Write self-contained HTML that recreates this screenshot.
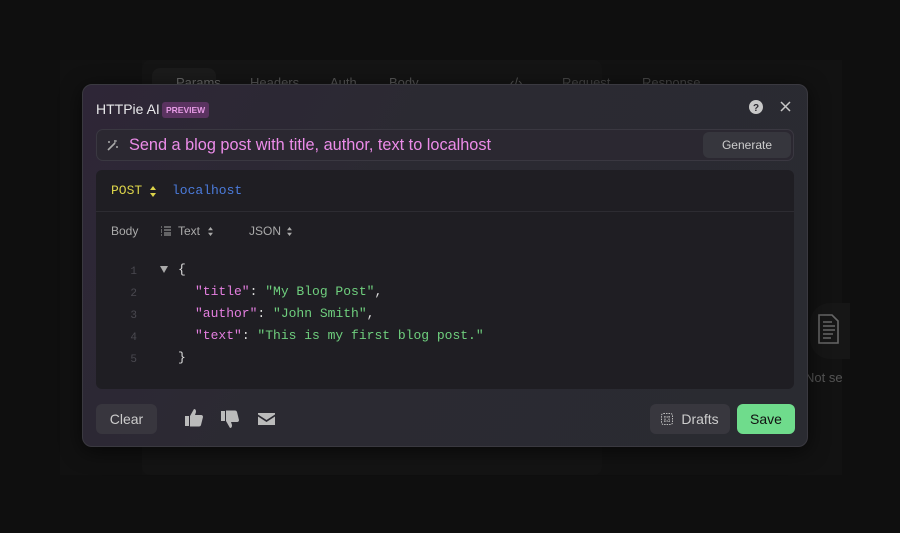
<!DOCTYPE html>
<html><head><meta charset="utf-8"><style>
*{box-sizing:border-box;margin:0;padding:0}
body{width:900px;height:533px;background:#0f0f0f;font-family:"Liberation Sans",sans-serif;position:relative;overflow:hidden}
.app{position:absolute;left:60px;top:60px;width:782px;height:415px;background:#121212;}
.app .side{position:absolute;left:0;top:0;width:82px;height:415px;background:#111}
.app .tabs{position:absolute;left:82px;top:0;width:460px;height:415px;background:#141414;border-radius:8px}
.tab{position:absolute;top:15px;font-size:13px;color:#555;white-space:nowrap}
.m{position:absolute;left:82px;top:84px;width:726px;height:363px;border-radius:10px;background:linear-gradient(120deg,#2e2637 0%,#2b2a32 40%,#2a2b31 100%);box-shadow:0 4px 20px rgba(0,0,0,.6);border:1px solid #3a3940}
.abs{position:absolute;white-space:nowrap}
.mono{font-family:"Liberation Mono",monospace}
.btn{position:absolute;border-radius:6px;font-size:14px;display:flex;align-items:center;justify-content:center}
</style></head><body>
<div class="app"><div class="side"></div><div class="tabs">
<div style="position:absolute;left:10px;top:8px;width:64px;height:30px;background:#1b1b1b;border-radius:8px"></div>
<span class="tab" style="left:34px;color:#666">Params</span><span class="tab" style="left:108px">Headers</span><span class="tab" style="left:188px">Auth</span><span class="tab" style="left:247px">Body</span><span class="tab" style="left:368px">‹/›</span>
</div>
<span class="tab" style="left:502px;top:15px;color:#444">Request</span><span class="tab" style="left:582px;top:15px;color:#444">Response</span>
<div style="position:absolute;left:750px;top:243px;width:40px;height:56px;background:#161616;border-radius:20px 0 0 20px"></div>
<svg class="abs" style="left:757px;top:253px" width="26" height="32" viewBox="0 0 26 32" fill="none" stroke="#666" stroke-width="1.6"><path d="M2 2h13l6 6v22H2z"/><path d="M6 9h9M6 13h12M6 17h12M6 21h10M6 25h8"/></svg>
<span class="tab" style="left:745px;top:310px;font-size:13px;color:#555">Not se</span>
</div>
<div class="m">
<span class="abs" style="left:13px;top:16px;color:#e8e8ea;font-size:14px">HTTPie AI</span>
<span class="abs" style="left:79px;top:17px;background:#5a3360;color:#e79be6;font-size:8.5px;font-weight:bold;padding:3px 4px;border-radius:3px">PREVIEW</span>
<svg class="abs" style="left:666px;top:15px" width="14" height="14" viewBox="0 0 14 14"><circle cx="7" cy="7" r="7" fill="#c8c8c8"/><text x="7" y="11" font-size="10" font-weight="bold" text-anchor="middle" fill="#2c2a31" font-family="Liberation Sans">?</text></svg>
<svg class="abs" style="left:697px;top:16px" width="11" height="11" viewBox="0 0 11 11" stroke="#c8c8c8" stroke-width="1.5"><path d="M1 1l9 9M10 1l-9 9"/></svg>
<div class="abs" style="left:13px;top:44px;width:698px;height:32px;border:1px solid #3a3841;border-radius:7px;background:#2b2831"></div>
<svg class="abs" style="left:23px;top:54px" width="13" height="13" viewBox="0 0 13 13" stroke="#aaa" stroke-width="1.6"><path d="M2 11l7-7"/><path d="M9 1v3M8 2h3M3 2v2M2 3h2M11 7v2M10 8h2" stroke-width="1"/></svg>
<span class="abs" style="left:46px;top:51px;color:#ec8ce9;font-size:16.3px">Send a blog post with title, author, text to localhost</span>
<div class="btn" style="left:620px;top:47px;width:88px;height:26px;background:#36363d;color:#ccc;font-size:12px">Generate</div>
<div class="abs" style="left:13px;top:85px;width:698px;height:219px;background:#1f1e23;border-radius:6px"></div>
<div class="abs" style="left:13px;top:126px;width:698px;height:1px;background:#2d2c32"></div>
<span class="abs mono" style="left:28px;top:98px;color:#dcd44a;font-size:13px">POST</span>
<svg class="abs" style="left:67px;top:101px" width="6" height="11" viewBox="0 0 6 11" fill="#dcd44a"><path d="M0 4l3-4 3 4zM0 7l3 4 3-4z"/></svg>
<span class="abs mono" style="left:89px;top:98px;color:#4b7bdb;font-size:13px">localhost</span>
<span class="abs" style="left:28px;top:139px;color:#aaa;font-size:12px">Body</span>
<svg class="abs" style="left:77px;top:141px" width="12" height="10" viewBox="0 0 12 10" stroke="#aaa" stroke-width="1"><path d="M1 1h1M4 1h7M1 4h1M4 4h7M4 7h7M1 9h1M4 9h7M1 6h1"/></svg>
<span class="abs" style="left:95px;top:139px;color:#aaa;font-size:12px">Text</span>
<svg class="abs" style="left:125px;top:142px" width="5" height="9" viewBox="0 0 6 11" fill="#aaa"><path d="M0 4l3-4 3 4zM0 7l3 4 3-4z"/></svg>
<span class="abs" style="left:166px;top:139px;color:#aaa;font-size:12px">JSON</span>
<svg class="abs" style="left:204px;top:142px" width="5" height="9" viewBox="0 0 6 11" fill="#aaa"><path d="M0 4l3-4 3 4zM0 7l3 4 3-4z"/></svg>
<div class="abs mono" style="left:40px;top:176px;color:#4a4950;font-size:11px;line-height:22px;text-align:right;width:14px">1<br>2<br>3<br>4<br>5</div>
<svg class="abs" style="left:77px;top:181px" width="8" height="7" viewBox="0 0 8 7" fill="#aaa"><path d="M0 0h8L4 7z"/></svg>
<div class="abs mono" style="left:95px;top:174px;color:#ddd;font-size:13px;line-height:22px;white-space:pre">{
<span style="padding-left:17px"><span style="color:#e47fe0">"title"</span>: <span style="color:#6fcf7e">"My Blog Post"</span>,</span>
<span style="padding-left:17px"><span style="color:#e47fe0">"author"</span>: <span style="color:#6fcf7e">"John Smith"</span>,</span>
<span style="padding-left:17px"><span style="color:#e47fe0">"text"</span>: <span style="color:#6fcf7e">"This is my first blog post."</span></span>
}</div>
<div class="btn" style="left:13px;top:319px;width:61px;height:30px;background:#38363e;color:#ccc">Clear</div>
<svg class="abs" style="left:101px;top:323px" width="20" height="20" viewBox="0 0 20 20" fill="#bbb"><path d="M1 8h4v10H1zM6 8l4-7c2 0 2 2 2 3l-1 3h6c1.5 0 2 1 2 2l-2 8c-.3 1-1 1.5-2 1.5H6z"/></svg>
<svg class="abs" style="left:137px;top:324px" width="20" height="20" viewBox="0 0 20 20" fill="#bbb" transform="scale(1,-1)"><path d="M1 8h4v10H1zM6 8l4-7c2 0 2 2 2 3l-1 3h6c1.5 0 2 1 2 2l-2 8c-.3 1-1 1.5-2 1.5H6z"/></svg>
<svg class="abs" style="left:175px;top:328px" width="17" height="12" viewBox="0 0 17 12" fill="#bbb"><path d="M0 0h17v1.5L8.5 7 0 1.5zM0 3.5l8.5 5.5 8.5-5.5V12H0z"/></svg>
<div class="btn" style="left:567px;top:319px;width:80px;height:30px;background:#38373e;color:#ccc;gap:8px"><svg width="12" height="12" viewBox="0 0 12 12" fill="none" stroke="#bbb" stroke-width="1" stroke-dasharray="1.5 1"><rect x=".5" y=".5" width="11" height="11" rx="2"/><path d="M4 3v6M8 3v6M3 4h6M3 8h6"/></svg>Drafts</div>
<div class="btn" style="left:654px;top:319px;width:58px;height:30px;background:#6fdc8c;color:#111">Save</div>
</div>
</body></html>
